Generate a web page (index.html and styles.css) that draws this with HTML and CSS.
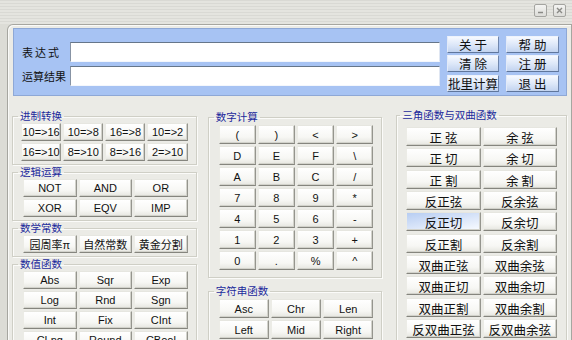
FILE: index.html
```html
<!DOCTYPE html>
<html lang="zh-CN">
<head>
    <meta charset="UTF-8">
    <title>计算器</title>
    <link rel="stylesheet" href="styles.css">
</head>
<body>

    <div class="titlebar">
        <span class="capbtn">
            <svg width="11" height="11" viewBox="0 0 11 11"><path d="M3 7.5h5" stroke="#8a8a86" stroke-width="1.5"/></svg>
        </span>
        <span class="capbtn">
            <svg width="11" height="11" viewBox="0 0 11 11"><path d="M3 3l5 5M8 3l-5 5" stroke="#8a8a86" stroke-width="1.4"/></svg>
        </span>
    </div>

    <div class="client">

        <div class="exprpanel">
            <div class="fields">
                <div class="fieldrow">
                    <label class="spaced">表达式</label>
                    <input type="text" class="textbox">
                </div>
                <div class="fieldrow">
                    <label>运算结果</label>
                    <input type="text" class="textbox">
                </div>
            </div>
            <div class="cmdgrid">
                <button class="cmd">关 于</button>
                <button class="cmd">帮 助</button>
                <button class="cmd">清 除</button>
                <button class="cmd">注 册</button>
                <button class="cmd">批里计算</button>
                <button class="cmd">退 出</button>
            </div>
        </div>

        <div class="panes">

            <div class="col col-left">
                <fieldset class="grp">
                    <legend>进制转换</legend>
                    <div class="btns four">
                        <button class="btn">10=&gt;16</button>
                        <button class="btn">10=&gt;8</button>
                        <button class="btn">16=&gt;8</button>
                        <button class="btn">10=&gt;2</button>
                        <button class="btn">16=&gt;10</button>
                        <button class="btn">8=&gt;10</button>
                        <button class="btn">8=&gt;16</button>
                        <button class="btn">2=&gt;10</button>
                    </div>
                </fieldset>
                <fieldset class="grp three">
                    <legend>逻辑运算</legend>
                    <div class="btns">
                        <button class="btn">NOT</button>
                        <button class="btn">AND</button>
                        <button class="btn">OR</button>
                        <button class="btn">XOR</button>
                        <button class="btn">EQV</button>
                        <button class="btn">IMP</button>
                    </div>
                </fieldset>
                <fieldset class="grp three">
                    <legend>数学常数</legend>
                    <div class="btns">
                        <button class="btn">园周率π</button>
                        <button class="btn">自然常数</button>
                        <button class="btn">黄金分割</button>
                    </div>
                </fieldset>
                <fieldset class="grp three">
                    <legend>数值函数</legend>
                    <div class="btns">
                        <button class="btn">Abs</button>
                        <button class="btn">Sqr</button>
                        <button class="btn">Exp</button>
                        <button class="btn">Log</button>
                        <button class="btn">Rnd</button>
                        <button class="btn">Sgn</button>
                        <button class="btn">Int</button>
                        <button class="btn">Fix</button>
                        <button class="btn">CInt</button>
                        <button class="btn">CLng</button>
                        <button class="btn">Round</button>
                        <button class="btn">CBool</button>
                    </div>
                </fieldset>
            </div>

            <div class="col col-mid">
                <fieldset class="grp keypad">
                    <legend>数字计算</legend>
                    <div class="btns four">
                        <button class="btn">(</button>
                        <button class="btn">)</button>
                        <button class="btn">&lt;</button>
                        <button class="btn">&gt;</button>
                        <button class="btn">D</button>
                        <button class="btn">E</button>
                        <button class="btn">F</button>
                        <button class="btn">\</button>
                        <button class="btn">A</button>
                        <button class="btn">B</button>
                        <button class="btn">C</button>
                        <button class="btn">/</button>
                        <button class="btn">7</button>
                        <button class="btn">8</button>
                        <button class="btn">9</button>
                        <button class="btn">*</button>
                        <button class="btn">4</button>
                        <button class="btn">5</button>
                        <button class="btn">6</button>
                        <button class="btn">-</button>
                        <button class="btn">1</button>
                        <button class="btn">2</button>
                        <button class="btn">3</button>
                        <button class="btn">+</button>
                        <button class="btn">0</button>
                        <button class="btn">.</button>
                        <button class="btn">%</button>
                        <button class="btn">^</button>
                    </div>
                </fieldset>
                <fieldset class="grp strfn">
                    <legend>字符串函数</legend>
                    <div class="btns">
                        <button class="btn">Asc</button>
                        <button class="btn">Chr</button>
                        <button class="btn">Len</button>
                        <button class="btn">Left</button>
                        <button class="btn">Mid</button>
                        <button class="btn">Right</button>
                    </div>
                </fieldset>
            </div>

            <div class="col col-right">
                <fieldset class="grp trig">
                    <legend>三角函数与双曲函数</legend>
                    <div class="btns">
                        <button class="btn">正 弦</button>
                        <button class="btn">余 弦</button>
                        <button class="btn">正 切</button>
                        <button class="btn">余 切</button>
                        <button class="btn">正 割</button>
                        <button class="btn">余 割</button>
                        <button class="btn">反正弦</button>
                        <button class="btn">反余弦</button>
                        <button class="btn hot">反正切</button>
                        <button class="btn">反余切</button>
                        <button class="btn">反正割</button>
                        <button class="btn">反余割</button>
                        <button class="btn">双曲正弦</button>
                        <button class="btn">双曲余弦</button>
                        <button class="btn">双曲正切</button>
                        <button class="btn">双曲余切</button>
                        <button class="btn">双曲正割</button>
                        <button class="btn">双曲余割</button>
                        <button class="btn">反双曲正弦</button>
                        <button class="btn">反双曲余弦</button>
                    </div>
                </fieldset>
            </div>

        </div>
    </div>

</body>
</html>
```

FILE: styles.css
```css
html{
    margin: 0;
    height: 100%;
}

body{
    margin: 0;
    height: 100%;
    overflow: hidden;
    background-color: #dcdcd6;
    font-family: "Liberation Sans", "Noto Sans CJK SC", sans-serif;
}

/* window caption */
.titlebar{
    height: 24px;
    display: flex;
    justify-content: flex-end;
    align-items: flex-start;
    gap: 6px;
    padding-right: 6px;
    box-sizing: border-box;
    background: repeating-linear-gradient(#d9d9d4 0 1px, #e4e4df 1px 3px);
}

.capbtn{
    margin-top: 4px;
    width: 13px;
    height: 13px;
    box-sizing: border-box;
    border: 1px solid #a4a4a0;
    border-radius: 2px;
    background: linear-gradient(#f4f4f2, #dcdcd8);
    display: flex;
    align-items: center;
    justify-content: center;
}

.client{
    margin-left: 7px;
    height: 100%;
    box-sizing: border-box;
    padding: 3px 4px 0 5px;
    background-color: #ebebe6;
    border: 1px solid #a6a6a0;
    border-bottom: none;
    border-radius: 6px 0 0 0;
    box-shadow: inset 1px 1px #fafaf8;
}

/* expression panel */
.exprpanel{
    height: 68px;
    box-sizing: border-box;
    padding: 3px 0 0 8px;
    background-color: #a7c3f3;
    border: 1px solid #8ea8d6;
    display: flex;
    align-items: center;
}

.fields{
    display: flex;
    flex-direction: column;
    gap: 4px;
}

.fieldrow{
    display: flex;
    align-items: center;
}

.fieldrow label{
    width: 48px;
    font-size: 11px;
    font-family: "Noto Sans CJK SC", sans-serif;
    color: #111;
}

.fieldrow label.spaced{
    letter-spacing: 2px;
}

.textbox{
    width: 370px;
    height: 20px;
    box-sizing: border-box;
    margin: 0;
    padding: 0 3px;
    background-color: #fff;
    border: 1px solid;
    border-color: #66768a #dfe6f2 #f4f7fc #8793a4;
}

.cmdgrid{
    margin-left: 7px;
    display: grid;
    grid-template-columns: 52px 53px;
    grid-auto-rows: 17px;
    column-gap: 7px;
    row-gap: 2.5px;
}

.cmd{
    margin: 0;
    padding: 0;
    font-size: 12.5px;
    font-family: "Noto Sans CJK SC", sans-serif;
    line-height: 15px;
    color: #111;
    background: linear-gradient(#f6f9ff, #dbe6f8 55%, #c2d3ef);
    border: 1px solid;
    border-color: #eef3fc #6f86ad #5f769c #e2eaf8;
}

/* lower panes */
.panes{
    display: flex;
    align-items: flex-start;
    margin-left: -1px;
}

.col-left{
    width: 185px;
    margin-top: 13px;
}

.col-mid{
    width: 175px;
    margin-top: 14px;
    margin-left: 11px;
}

.col-right{
    width: 171px;
    margin-top: 12px;
    margin-left: 14px;
}

.grp{
    margin: 0;
    min-width: 0;
    padding: 0 8px 3px 8px;
    border: 1px solid #cfcfc6;
    box-shadow: 1px 1px #fbfbf9, inset 1px 1px #fbfbf9;
}

.grp legend{
    margin-left: -3px;
    padding: 0 2px;
    font-size: 10.5px;
    line-height: 14px;
    font-family: "Noto Sans CJK SC", sans-serif;
    color: #1c2a9c;
}

.btns{
    display: grid;
    grid-template-columns: 1fr 1fr 1fr;
    grid-auto-rows: 18px;
    gap: 2px;
}

.btns.four{
    grid-template-columns: 1fr 1fr 1fr 1fr;
}

.grp.three{
    padding-left: 10px;
}

.grp.three legend,
.keypad legend,
.strfn legend{
    margin-left: -5px;
}

.btn{
    margin: 0;
    padding: 0;
    min-width: 0;
    font-size: 11px;
    font-family: "Liberation Sans", "Noto Sans CJK SC", sans-serif;
    color: #111;
    white-space: nowrap;
    background: linear-gradient(#ffffff, #f7f7f4 65%, #e6e6e0);
    border: 1px solid;
    border-color: #e6e6e0 #95958e #85857e #ecece6;
    box-shadow: inset -1px -1px #d2d2cb;
}

.keypad{
    padding: 1px 8px 7px 10px;
}

.keypad .btns,
.strfn .btns{
    grid-auto-rows: 19px;
}

.strfn{
    margin-top: 6px;
    padding: 1px 8px 3px 10px;
}

.trig{
    padding: 5px 9px 3px 9px;
}

.trig legend{
    margin-left: -6px;
}

.trig .btns{
    grid-template-columns: 1fr 1fr;
    grid-auto-rows: 19px;
    row-gap: 2.33px;
}

.trig .btn{
    font-size: 12.5px;
    font-family: "Noto Sans CJK SC", sans-serif;
}

.btn.hot{
    background: linear-gradient(170deg, #b7cdf2, #dfe9fa 60%, #f8fbff);
}
```
